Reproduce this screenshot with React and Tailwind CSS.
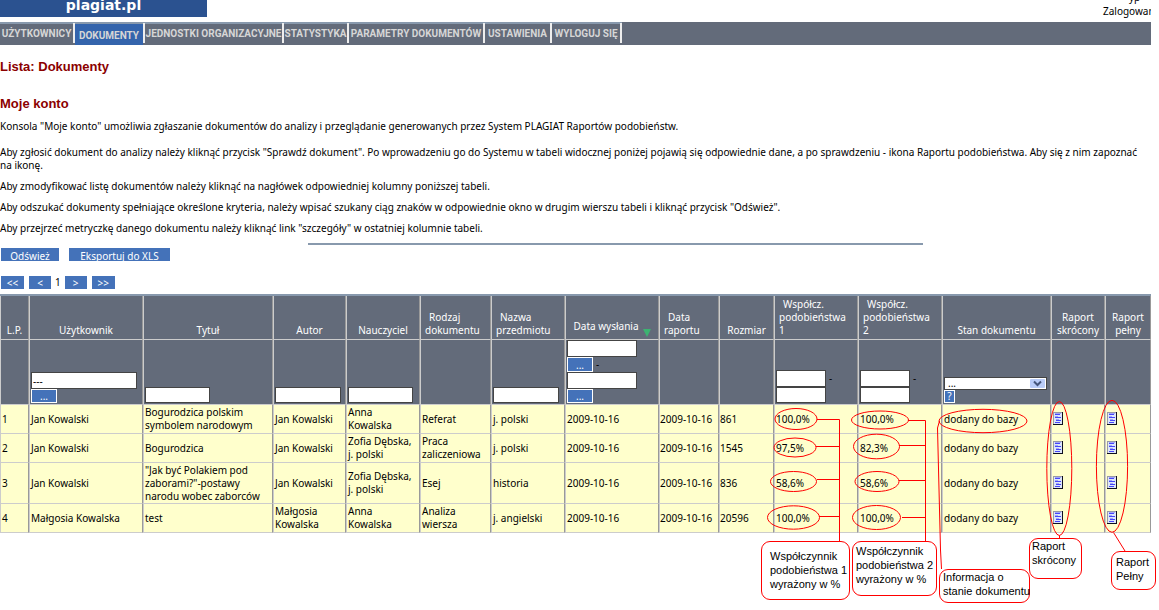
const NAV = [
  { label: "UŻYTKOWNICY", w: "w-[75px]" },
  { label: "DOKUMENTY", w: "w-[70px]", active: true },
  { label: "JEDNOSTKI ORGANIZACYJNE", w: "w-[139px]" },
  { label: "STATYSTYKA", w: "w-[65px]" },
  { label: "PARAMETRY DOKUMENTÓW", w: "w-[136px]" },
  { label: "USTAWIENIA", w: "w-[67px]" },
  { label: "WYLOGUJ SIĘ", w: "w-[70px]" },
];

const COLS = [
  "w-[29px]", "w-[114px]", "w-[130px]", "w-[73px]", "w-[74px]", "w-[71px]", "w-[74px]", "w-[94px]",
  "w-[60px]", "w-[55px]", "w-[84px]", "w-[84px]", "w-[109px]", "w-[54px]", "w-[46px]",
];

const HEADERS = [
  { lines: ["L.P."] },
  { lines: ["Użytkownik"] },
  { lines: ["Tytuł"] },
  { lines: ["Autor"] },
  { lines: ["Nauczyciel"] },
  { lines: ["Rodzaj", "dokumentu"], left: true },
  { lines: ["Nazwa", "przedmiotu"], left: true },
  { lines: ["Data wysłania"], sorted: true },
  { lines: ["Data", "raportu"], left: true },
  { lines: ["Rozmiar"] },
  { lines: ["Współcz.", "podobieństwa", "1"], left: true },
  { lines: ["Współcz.", "podobieństwa", "2"], left: true },
  { lines: ["Stan dokumentu"] },
  { lines: ["Raport", "skrócony"] },
  { lines: ["Raport", "pełny"] },
];

const ROWS = [
  { h: "h-[29px]", cells: ["1", "Jan Kowalski", "Bogurodzica polskim\nsymbolem narodowym", "Jan Kowalski", "Anna\nKowalska", "Referat", "j. polski", "2009-10-16", "2009-10-16", "861", "100,0%", "100,0%", "dodany do bazy"] },
  { h: "h-[29px]", cells: ["2", "Jan Kowalski", "Bogurodzica", "Jan Kowalski", "Zofia Dębska,\nj. polski", "Praca\nzaliczeniowa", "j. polski", "2009-10-16", "2009-10-16", "1545", "97,5%", "82,3%", "dodany do bazy"] },
  { h: "h-[41px]", cells: ["3", "Jan Kowalski", "\"Jak być Polakiem pod\nzaborami?\"-postawy\nnarodu wobec zaborców", "Jan Kowalski", "Zofia Dębska,\nj. polski", "Esej", "historia", "2009-10-16", "2009-10-16", "836", "58,6%", "58,6%", "dodany do bazy"] },
  { h: "h-[29px]", cells: ["4", "Małgosia Kowalska", "test", "Małgosia\nKowalska", "Anna\nKowalska", "Analiza\nwiersza", "j. angielski", "2009-10-16", "2009-10-16", "20596", "100,0%", "100,0%", "dodany do bazy"] },
];

// Columns whose text starts right at the cell border.
const TIGHT_COLUMNS = [8, 9];

const cellBorder = "border-l border-r border-b border-l-[#cccccc] border-r-[#999999] border-b-[#cccccc]";

function Field({ label, className, ...rest }) {
  return (
    <input
      type="text"
      aria-label={label}
      className={`block border border-[#444444] bg-white px-px text-black outline-none ${className}`}
      {...rest}
    />
  );
}

function PickButton({ label, className = "h-[14px]" }) {
  return (
    <button
      aria-label={label}
      className={`block w-[26px] border border-white bg-[#4472b9] text-center leading-[12px] text-white ${className}`}
    >
      ...
    </button>
  );
}

function BlueButton({ children, className }) {
  return (
    <button className={`h-[13px] overflow-hidden bg-[#4472b9] text-white ${className}`}>{children}</button>
  );
}

function ReportIcon() {
  return (
    <svg width="10" height="13" viewBox="0 0 10 13" shapeRendering="crispEdges" aria-hidden="true">
      <rect width="10" height="13" fill="#101020" />
      <rect width="9" height="12" fill="#9a9aa8" />
      <rect x="1" y="1" width="8" height="11" fill="#dde6fa" />
      <path d="M2 2.5h5M2 5.5h6M3 8.5h5M2 10.5h5" stroke="#4646f8" />
      <path d="M2 1.5h6M2 4.5h3M3 7.5h3" stroke="#a0a6f6" />
    </svg>
  );
}

function RangeFilter({ label }) {
  return (
    <div>
      <div className="flex items-center gap-[3px]">
        <Field label={`${label} od`} className="h-[17px] w-[50px]" />
        <span className="text-black">-</span>
      </div>
      <Field label={`${label} do`} className="h-[16px] w-[50px]" />
    </div>
  );
}

const FILTERS = [
  null,
  <div>
    <Field label="Użytkownik" defaultValue="---" className="h-[17px] w-[106px]" />
    <PickButton label="Wybierz użytkownika" />
  </div>,
  <Field label="Tytuł" className="h-[16px] w-[65px]" />,
  <Field label="Autor" className="h-[16px] w-[66px]" />,
  <Field label="Nauczyciel" className="h-[16px] w-[65px]" />,
  null,
  <Field label="Nazwa przedmiotu" className="h-[16px] w-[66px]" />,
  <div>
    <Field label="Data wysłania od" className="h-[17px] w-[70px]" />
    <div className="flex items-center gap-[3px]">
      <PickButton label="Wybierz datę od" className="h-[15px]" />
      <span className="leading-[15px] text-black">-</span>
    </div>
    <Field label="Data wysłania do" className="h-[17px] w-[70px]" />
    <PickButton label="Wybierz datę do" />
  </div>,
  null,
  null,
  <RangeFilter label="Współczynnik podobieństwa 1" />,
  <RangeFilter label="Współczynnik podobieństwa 2" />,
  <div>
    <div className="relative w-[103px]">
      <select
        aria-label="Stan dokumentu"
        className="block h-[13px] w-full appearance-none border border-[#444444] bg-white pl-[3px] leading-[11px] text-black outline-none"
      >
        <option>...</option>
      </select>
      <svg className="pointer-events-none absolute top-[2px] right-[2px]" width="15" height="9" viewBox="0 0 15 9" aria-hidden="true">
        <rect width="15" height="9" rx="1" fill="#b9ccf8" />
        <path d="M4 2.5l3.5 3.5L11 2.5" fill="none" stroke="#44557c" strokeWidth="2" />
      </svg>
    </div>
    <button aria-label="Pomoc" className="block h-[13px] w-[11px] border border-white bg-[#4472b9] text-center leading-[11px] text-white">
      ?
    </button>
  </div>,
  null,
  null,
];

const ELLIPSES = [
  [796, 419, 21, 10.5], [795, 447.5, 21, 9.5], [793.5, 481.5, 23, 10], [793.5, 517.5, 26, 11.7],
  [880, 420, 28.5, 9], [876.5, 446.5, 23, 12.3], [877, 481.5, 22, 10], [876.5, 517.5, 24, 12],
  [983, 421, 44, 11.7], [1059.3, 468.5, 12.5, 67], [1112, 466.3, 15.6, 66],
];

const CALLOUTS = [
  { lines: ["Współczynnik", "podobieństwa 1", "wyrażony w %"], box: "left-[761px] top-[541px] w-[89px] h-[59px] pl-2 pt-[7px]" },
  { lines: ["Współczynnik", "podobieństwa 2", "wyrażony w %"], box: "left-[852px] top-[541px] w-[85px] h-[55px] pl-[3px] pt-[2px]" },
  { lines: ["Informacja o", "stanie dokumentu"], box: "left-[939px] top-[569px] w-[91px] h-[34px] pl-[3px]" },
  { lines: ["Raport", "skrócony"], box: "left-[1029px] top-[538px] w-[53px] h-[41px] pl-[2px]" },
  { lines: ["Raport", "Pełny"], box: "left-[1111px] top-[551px] w-[45px] h-[39px] pl-[4px] pt-[3px]" },
];

function Annotations() {
  return (
    <div className="pointer-events-none absolute top-0 left-0 font-['Liberation_Sans',sans-serif] text-[11px] leading-[14px]">
      <svg width="1159" height="610" viewBox="0 0 1159 610" fill="none" stroke="#ff0000" aria-hidden="true">
        {ELLIPSES.map(([cx, cy, rx, ry]) => (
          <ellipse key={`${cx}-${cy}`} cx={cx} cy={cy} rx={rx} ry={ry} />
        ))}
        <path d="M817 419.5H839.5V541M816 446.5H839.5M817 479.5H839.5M819 516.5H839.5" />
        <path d="M908 420.5H925.5V541M899 445.5H925.5M899 480.5H925.5M902 517.5H925.5" />
        <path d="M939.5 421L937.5 428L940.5 550L941.5 569M1059.5 535.5V538M1113.5 532.5L1125 551" />
      </svg>
      {CALLOUTS.map(({ lines, box }) => (
        <div key={box} className={`absolute rounded-[9px] border border-[#ff0000] whitespace-nowrap ${box}`}>
          {lines.map((line) => <div key={line}>{line}</div>)}
        </div>
      ))}
    </div>
  );
}

export default function App() {
  return (
    <div className="relative min-h-screen overflow-x-hidden bg-white font-['Noto_Sans',sans-serif] text-[10px] leading-[13px] text-black">
      <div className="mr-2">
        <header className="flex h-[22px] items-start justify-between overflow-hidden">
          <div className="flex h-[17px] w-[207px] items-center justify-center bg-[#2b5290] font-['DejaVu_Sans',sans-serif] text-[14px] leading-[14px] font-bold text-white">
            <span className="-mt-[7px]">plagiat.pl</span>
          </div>
          <div className="w-12 whitespace-nowrap">
            <div className="-mt-[9px] h-[14px] pl-[26px]">yp</div>
            <div>Zalogowan</div>
          </div>
        </header>

        <nav className="flex h-[23px] bg-[#636b7a] font-['Roboto',sans-serif] font-bold">
          {NAV.map(({ label, w, active }) => (
            <div key={label} className={`flex border-t-2 border-[#8899ad] ${w}`}>
              <a
                href="#"
                className={`flex grow items-center justify-center whitespace-nowrap text-[#d6d6d6] ${active ? "bg-[#3464ac] pt-[2px]" : "pb-[2px]"}`}
              >
                {label}
              </a>
              <span className="-mt-px h-5 w-[2px] bg-[#eeeeee]" />
            </div>
          ))}
        </nav>

        <main>
          <h1 className="mt-[14px] font-['Liberation_Sans',sans-serif] text-[13px] leading-4 font-bold text-[#8b0000]">Lista: Dokumenty</h1>
          <h2 className="mt-[21px] font-['Liberation_Sans',sans-serif] text-[13px] leading-4 font-bold text-[#8b0000]">Moje konto</h2>
          <p className="mt-2">Konsola "Moje konto" umożliwia zgłaszanie dokumentów do analizy i przeglądanie generowanych przez System PLAGIAT Raportów podobieństw.</p>
          <p className="mt-[13px]">
            Aby zgłosić dokument do analizy należy kliknąć przycisk "Sprawdź dokument". Po wprowadzeniu go do Systemu w tabeli widocznej poniżej pojawią się odpowiednie dane, a po sprawdzeniu - ikona Raportu podobieństwa. Aby się z nim zapoznać <span className="whitespace-nowrap">na ikonę.</span>
          </p>
          <p className="mt-2">Aby zmodyfikować listę dokumentów należy kliknąć na nagłówek odpowiedniej kolumny poniższej tabeli.</p>
          <p className="mt-2">Aby odszukać dokumenty spełniające określone kryteria, należy wpisać szukany ciąg znaków w odpowiednie okno w drugim wierszu tabeli i kliknąć przycisk "Odśwież".</p>
          <p className="mt-2">Aby przejrzeć metryczkę danego dokumentu należy kliknąć link "szczegóły" w ostatniej kolumnie tabeli.</p>
          <hr className="mt-2 ml-[308px] w-[615px] border-t-2 border-[#8899ad]" />

          <div className="mt-[3px] flex gap-[10px] pl-px">
            <BlueButton className="w-[58px] leading-[17px]">Odśwież</BlueButton>
            <BlueButton className="w-[101px] leading-[17px]">Eksportuj do XLS</BlueButton>
          </div>
          <div className="mt-[15px] flex items-center gap-[5px] pl-px">
            <BlueButton className="w-[23px] leading-[14px]">&lt;&lt;</BlueButton>
            <BlueButton className="w-[22px] leading-[14px]">&lt;</BlueButton>
            <span className="-mx-px">1</span>
            <BlueButton className="w-[22px] leading-[14px]">&gt;</BlueButton>
            <BlueButton className="w-[23px] leading-[14px]">&gt;&gt;</BlueButton>
          </div>

          <table className="mt-[5px] w-full table-fixed border-separate border-spacing-0 border-t-2 border-[#8899ad]">
            <colgroup>
              {COLS.map((w, i) => <col key={i} className={w} />)}
            </colgroup>
            <thead className="bg-[#636b7a] text-white">
              <tr className="h-11">
                {HEADERS.map(({ lines, left, sorted }, i) => (
                  <th key={i} className={`p-0 pb-[2px] align-bottom font-normal ${cellBorder}`}>
                    <button className={`w-full whitespace-nowrap ${left ? "pl-1 text-left" : "text-center"}`}>
                      {sorted ? (
                        <span className="flex items-end justify-center gap-1">
                          <span className="pb-1">{lines[0]}</span>
                          <svg width="8" height="8" viewBox="0 0 8 8" aria-hidden="true"><path d="M0 0h8L4 8z" fill="#3cb371" /></svg>
                        </span>
                      ) : (
                        lines.map((line, n) => (
                          <span key={n} className={`block ${left && n === 0 ? "pl-1" : ""}`}>{line}</span>
                        ))
                      )}
                    </button>
                  </th>
                ))}
              </tr>
              <tr className="h-[65px]">
                {FILTERS.map((filter, i) => (
                  <td key={i} className={`p-0 pb-px pl-px align-bottom ${cellBorder}`}>{filter}</td>
                ))}
              </tr>
            </thead>
            <tbody className="bg-[#ffffcc]">
              {ROWS.map(({ h, cells }) => (
                <tr key={cells[0]} className={h}>
                  {cells.map((text, i) => (
                    <td key={i} className={`whitespace-pre ${TIGHT_COLUMNS.includes(i) ? "p-0" : "p-0 pl-px"} ${cellBorder}`}>{text}</td>
                  ))}
                  {["Raport skrócony", "Raport pełny"].map((label) => (
                    <td key={label} className={`p-0 pb-[2px] pl-px ${cellBorder}`}>
                      <a href="#" aria-label={label} className="flex w-fit"><ReportIcon /></a>
                    </td>
                  ))}
                </tr>
              ))}
            </tbody>
          </table>
        </main>
      </div>
      <Annotations />
    </div>
  );
}
